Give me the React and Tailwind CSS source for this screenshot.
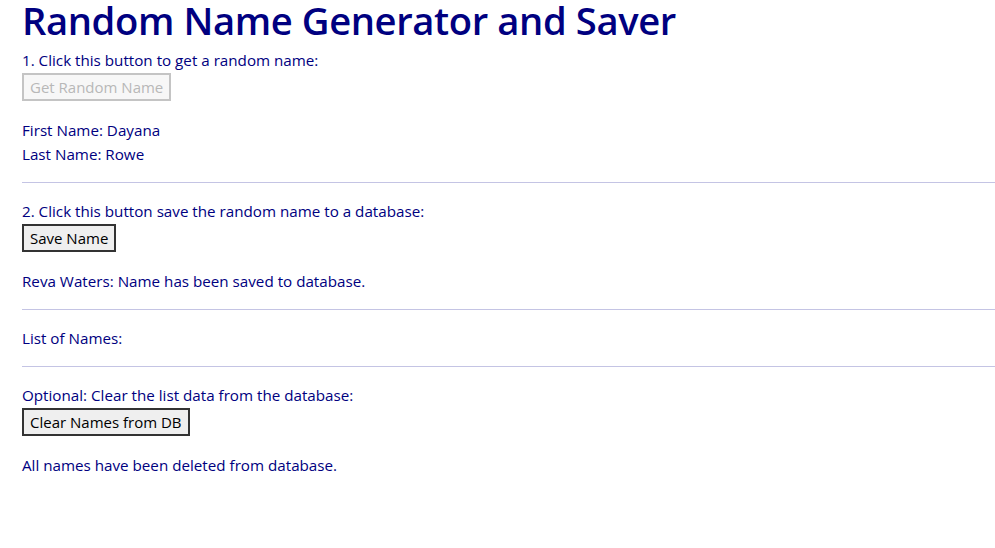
export default function App() {
  const font = { fontFamily: '"Open Sans", "Noto Sans", sans-serif' };
  return (
    <div className="min-h-[548px] bg-white pl-[22px] text-[#000080]" style={font}>
      <h1 className="m-0 mb-[8px] text-[38.2px] font-semibold leading-[40px] tracking-[-0.4px]">Random Name Generator and Saver</h1>
      <div className="text-[15.2px] leading-[24px]">1. Click this button to get a random name:</div>
      <div className="mt-px">
        <button disabled className="h-[28px] border-2 border-[#c4c4c4] bg-[#f7f7f7] px-[6px] text-[15px] text-[#b8b8b8]">Get Random Name</button>
      </div>
      <div className="mt-[17px] text-[15.2px] leading-[24px]">First Name: Dayana</div>
      <div className="text-[15.2px] leading-[24px]">Last Name: Rowe</div>
      <div className="mt-[16px] h-px bg-[#c4c4e4]" />
      <div className="mt-[16px] text-[15.2px] leading-[24px]">2. Click this button save the random name to a database:</div>
      <div className="mt-px">
        <button className="h-[28px] border-2 border-[#333] bg-[#efefef] px-[6px] text-[15px] text-black">Save Name</button>
      </div>
      <div className="mt-[17px] text-[15.2px] leading-[24px]">Reva Waters: Name has been saved to database.</div>
      <div className="mt-[16px] h-px bg-[#c4c4e4]" />
      <div className="mt-[16px] text-[15.2px] leading-[24px]">List of Names:</div>
      <div className="mt-[16px] h-px bg-[#c4c4e4]" />
      <div className="mt-[16px] text-[15.2px] leading-[24px]">Optional: Clear the list data from the database:</div>
      <div className="mt-px">
        <button className="h-[28px] border-2 border-[#333] bg-[#efefef] px-[6px] text-[15px] text-black">Clear Names from DB</button>
      </div>
      <div className="mt-[17px] text-[15.2px] leading-[24px]">All names have been deleted from database.</div>
    </div>
  );
}
